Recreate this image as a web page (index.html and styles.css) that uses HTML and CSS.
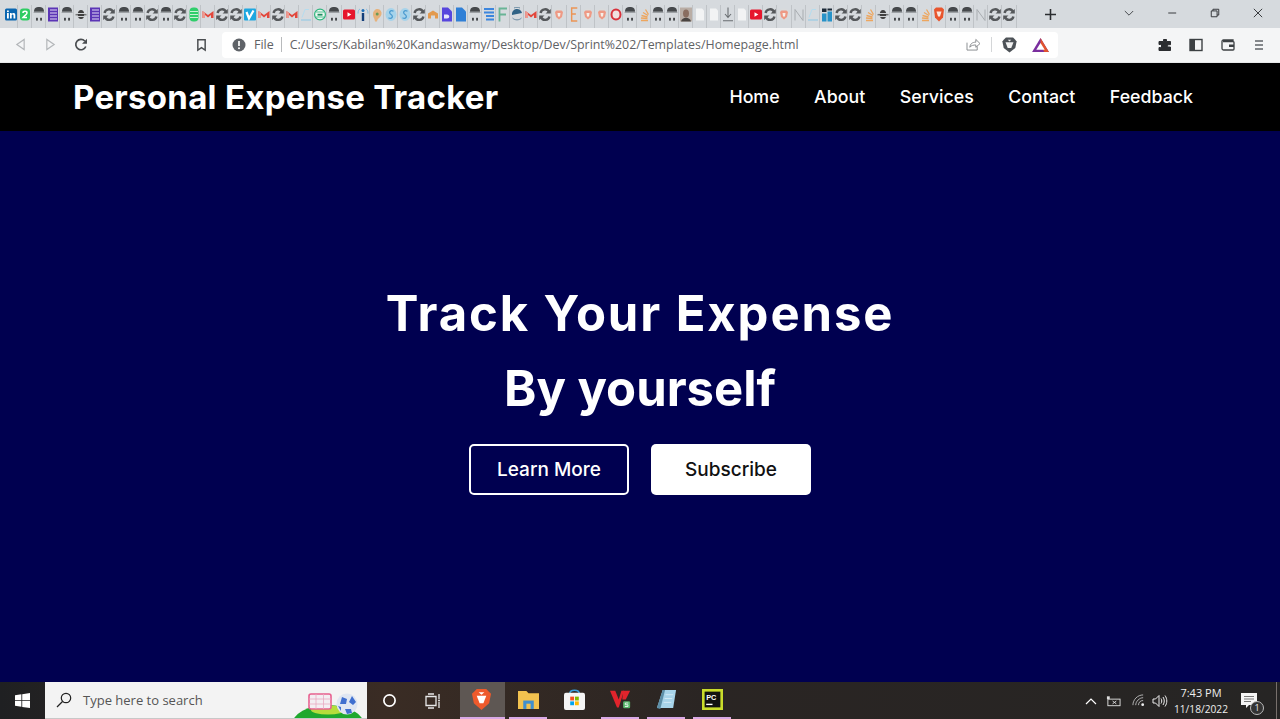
FILE: index.html
```html
<!DOCTYPE html>
<html lang="en">
<head>
<meta charset="utf-8">
<title>Personal Expense Tracker</title>
<link rel="stylesheet" href="styles.css">
</head>
<body>
<svg class="defs" width="0" height="0" aria-hidden="true">
  <symbol id="li" viewBox="0 0 12 12"><rect width="12" height="12" rx="1.5" fill="#0a66b0"/><rect x="2" y="4.5" width="1.8" height="5.5" fill="#fff"/><rect x="2" y="2" width="1.8" height="1.6" fill="#fff"/><path d="M5 4.5h1.7v.9c.9-1.4 3.6-1.4 3.6 1V10H8.5V7c0-1.3-1.8-1.2-1.8.1V10H5z" fill="#fff"/></symbol>
  <symbol id="two" viewBox="0 0 12 14"><rect x="1" y="1" width="10" height="12" rx="3" fill="#2ecc63"/><path d="M4 5.500c0-2.200 4-2.200 4 0 0 1.500-2.500 2.500-4 4.500h4" fill="none" stroke="#fff" stroke-width="1.500"/></symbol>
  <symbol id="gh" viewBox="0 0 12 15"><path d="M1 4.800C1 1 3 0 6 0s5 1 5 4.800z" fill="#45484b"/><rect x=".6" y="4.800" width="10.800" height="1.200" fill="#9da1a5"/><rect x="3" y="10.800" width="1.900" height="2.800" fill="#45484b"/><rect x="7.100" y="10.800" width="1.900" height="2.800" fill="#45484b"/></symbol>
  <symbol id="e" viewBox="0 0 12 14"><rect x="1" width="10" height="14" fill="#5b35b5"/><path d="M3 2.500h7M3 5.500h7M3 8.500h7M3 11.500h7" stroke="#e4dcf6" stroke-width="1"/></symbol>
  <symbol id="bee" viewBox="0 0 12 14"><ellipse cx="6" cy="7" rx="3.200" ry="4.500" fill="#3f3f3f"/><path d="M1 6h10M2 9h8" stroke="#d0d3d6" stroke-width="1"/><path d="M.5 7.300h11" stroke="#3f3f3f" stroke-width=".9"/></symbol>
  <symbol id="sy" viewBox="0 0 12 15"><path d="M1.600 6C2.300 1.800 8.500.8 10 5" fill="none" stroke="#55585b" stroke-width="2.400"/><path d="M10.400 9.500C9.700 13.500 3.500 14.200 2 10" fill="none" stroke="#55585b" stroke-width="2.400"/><path d="M6.500 6.500h5.300V2zM5.500 8.500H.2V13z" fill="#55585b"/></symbol>
  <symbol id="sp" viewBox="0 0 12 14"><rect x="1.500" width="9" height="14" rx="4" fill="#2fce6b"/><path d="M2 4h8M2 7h8M2 10h8" stroke="#c9efd6" stroke-width="1"/></symbol>
  <symbol id="m" viewBox="0 0 12 12"><path d="M.5 2.500 6 6.500l5.500-4v7H9V6.500L6 9 3 6.500v3H.5z" fill="#e2483d"/><path d="M.5 2.500 3 4.500v5H.5z" fill="#ee9a90"/></symbol>
  <symbol id="v" viewBox="0 0 12 14"><rect y="1" width="12" height="12" rx="1" fill="#1ea7e0"/><path d="M2.500 4.500 5 11 9.500 3" fill="none" stroke="#fff" stroke-width="2.200"/></symbol>
  <symbol id="lb" viewBox="0 0 12 14"><path d="M1 12.500h10" stroke="#8cc8e6" stroke-width="1"/><path d="M2 10l3-8h4" fill="none" stroke="#b5dcee" stroke-width="1"/></symbol>
  <symbol id="cb" viewBox="0 0 12 14"><circle cx="6" cy="7" r="5.400" fill="#eef7f1" stroke="#2cb67d" stroke-width="1.200"/><path d="M2 4.500h8M2 9.500h8" stroke="#2cb67d" stroke-width=".8"/><path d="M3.500 7.200h5" stroke="#1d8f60" stroke-width="1.800"/></symbol>
  <symbol id="yt" viewBox="0 0 12 12"><rect y="1" width="12" height="10" rx="1.500" fill="#e6162d"/><path d="M4.500 3.800 8.300 6 4.500 8.200z" fill="#fff"/></symbol>
  <symbol id="i" viewBox="0 0 12 14"><circle cx="6" cy="3" r="1.500" fill="#1d6fb8"/><rect x="4.800" y="5.500" width="2.400" height="8" fill="#143f7a"/><path d="M1 6C1 3 2 2 3 1.500M11 6c0-3-1-4-2-4.500" fill="none" stroke="#7cb6df" stroke-width=".9"/></symbol>
  <symbol id="ear" viewBox="0 0 12 14"><path d="M2 7C2 1 9-.5 10.500 5 11 10 6.500 10 6 14H4C3.500 10 2 10 2 7z" fill="#e6b27c"/><circle cx="6.200" cy="6.500" r="1.500" fill="#6c9a58"/></symbol>
  <symbol id="bl" viewBox="0 0 12 14"><ellipse cx="6" cy="7" rx="5.500" ry="6.500" fill="#a6d3ea"/><path d="M8.500 3.800C5.500 2 3 5 6 7s.5 5-2.500 3.200" fill="none" stroke="#4b9bd0" stroke-width="1.300"/></symbol>
  <symbol id="or" viewBox="0 0 12 12"><path d="M1 10V5l5-3 5 3v5H8V7H4v3z" fill="#e39a4e"/></symbol>
  <symbol id="pd" viewBox="0 0 12 14"><path d="M1 0h6l4 4v10H1z" fill="#5746dd"/><path d="M3 7h3c3 0 3 4 0 4H3z" fill="#e6e4fb"/></symbol>
  <symbol id="bd" viewBox="0 0 12 14"><path d="M1 0h6l4 4v10H1z" fill="#2f7fd6"/></symbol>
  <symbol id="gd" viewBox="0 0 12 14"><path d="M1 1.500h10M1 5h10M3 8.500h8M3 12h8" stroke="#3c86dd" stroke-width="1.800"/></symbol>
  <symbol id="f" viewBox="0 0 12 14"><path d="M2.500 14V1H10M2.500 7H9" fill="none" stroke="#69b496" stroke-width="1.800"/></symbol>
  <symbol id="dc" viewBox="0 0 12 15"><path d="M1 8a5 5 0 0 1 10-2z" fill="#2f6285"/><path d="M1.500 11c2.500 2.500 6.500 2.500 9 0M3 1c2-1 4-1 6 0" fill="none" stroke="#5a7f98" stroke-width=".9"/></symbol>
  <symbol id="br" viewBox="0 0 12 14"><circle cx="6" cy="7" r="5.900" fill="#d9dbdc"/><path d="M3.500 3h5l1.500 1.500-1 5L6 12 3 9.500l-1-5z" fill="#ee9a85"/><path d="M4.500 5.500h3L7 9H5z" fill="#f5efe9"/></symbol>
  <symbol id="eo" viewBox="0 0 12 16"><path d="M9.500 1H3.500v14h6M3.500 7.500H8" fill="none" stroke="#ec9555" stroke-width="1.500"/></symbol>
  <symbol id="ro" viewBox="0 0 12 14"><ellipse cx="6" cy="7" rx="4.500" ry="5" fill="#f0e0e0" stroke="#d8323c" stroke-width="2"/></symbol>
  <symbol id="so" viewBox="0 0 12 14"><path d="M3 13h7M3 10.500l6.500.5M3.500 8l6 1.500M5 5l5 3M7.500 2l3 5" fill="none" stroke="#eda65f" stroke-width="1.300"/></symbol>
  <symbol id="ph" viewBox="0 0 12 14"><rect width="12" height="14" fill="#b9ada5"/><ellipse cx="6" cy="6" rx="3" ry="4" fill="#8a6d5f"/><path d="M1 14c1-5 9-5 10 0z" fill="#4a4441"/></symbol>
  <symbol id="wh" viewBox="0 0 12 14"><path d="M2 1h6l2 2v10H2z" fill="#f2f3f4"/></symbol>
  <symbol id="dl" viewBox="0 0 12 14"><path d="M6 0v9.500M3 6.500 6 10l3-3.500M1 13.300h10" fill="none" stroke="#6a6e72" stroke-width="1.100"/></symbol>
  <symbol id="n" viewBox="0 0 12 14"><path d="M2 13V2l8 11V2" fill="none" stroke="#a8acb0" stroke-width="1"/></symbol>
  <symbol id="bk" viewBox="0 0 12 14"><rect x="1" y="6" width="4.500" height="8" fill="#2792c8"/><rect x="6.500" y="4" width="4.500" height="10" fill="#2792c8"/><rect x="1" y="1" width="4.500" height="3.500" fill="#1c2a38"/><rect x="6.500" y="1" width="4.500" height="2" fill="#1c2a38"/></symbol>
  <symbol id="bv" viewBox="0 0 12 14"><path d="M3 0h6l2 2-1 8-4 4-4-4L1 2z" fill="#e8552d"/><path d="M3.500 4h5L7 9H5z" fill="#fbe6dd"/></symbol>
</svg>

<div class="window">
  <div class="tabstrip">
    <div class="tabs">
      <i class="tab"><svg><use href="#li"/></svg></i><i class="tab"><svg><use href="#two"/></svg></i><i class="tab"><svg><use href="#gh"/></svg></i><i class="tab"><svg><use href="#e"/></svg></i><i class="tab"><svg><use href="#gh"/></svg></i><i class="tab"><svg><use href="#bee"/></svg></i><i class="tab"><svg><use href="#e"/></svg></i><i class="tab"><svg><use href="#sy"/></svg></i><i class="tab"><svg><use href="#gh"/></svg></i><i class="tab"><svg><use href="#gh"/></svg></i><i class="tab"><svg><use href="#sy"/></svg></i><i class="tab"><svg><use href="#gh"/></svg></i><i class="tab"><svg><use href="#sy"/></svg></i><i class="tab"><svg><use href="#sp"/></svg></i><i class="tab"><svg><use href="#m"/></svg></i><i class="tab"><svg><use href="#sy"/></svg></i><i class="tab"><svg><use href="#sy"/></svg></i><i class="tab"><svg><use href="#v"/></svg></i><i class="tab"><svg><use href="#m"/></svg></i><i class="tab"><svg><use href="#sy"/></svg></i><i class="tab"><svg><use href="#m"/></svg></i><i class="tab"><svg><use href="#lb"/></svg></i><i class="tab"><svg><use href="#cb"/></svg></i><i class="tab"><svg><use href="#gh"/></svg></i><i class="tab"><svg><use href="#yt"/></svg></i><i class="tab"><svg><use href="#i"/></svg></i><i class="tab"><svg><use href="#ear"/></svg></i><i class="tab"><svg><use href="#bl"/></svg></i><i class="tab"><svg><use href="#bl"/></svg></i><i class="tab"><svg><use href="#sy"/></svg></i><i class="tab"><svg><use href="#or"/></svg></i><i class="tab"><svg><use href="#pd"/></svg></i><i class="tab"><svg><use href="#bd"/></svg></i><i class="tab"><svg><use href="#gh"/></svg></i><i class="tab"><svg><use href="#gd"/></svg></i><i class="tab"><svg><use href="#f"/></svg></i><i class="tab"><svg><use href="#dc"/></svg></i><i class="tab"><svg><use href="#m"/></svg></i><i class="tab"><svg><use href="#sy"/></svg></i><i class="tab"><svg><use href="#br"/></svg></i><i class="tab"><svg><use href="#eo"/></svg></i><i class="tab"><svg><use href="#br"/></svg></i><i class="tab"><svg><use href="#br"/></svg></i><i class="tab"><svg><use href="#ro"/></svg></i><i class="tab"><svg><use href="#gh"/></svg></i><i class="tab"><svg><use href="#so"/></svg></i><i class="tab"><svg><use href="#gh"/></svg></i><i class="tab"><svg><use href="#gh"/></svg></i><i class="tab"><svg><use href="#ph"/></svg></i><i class="tab"><svg><use href="#wh"/></svg></i><i class="tab"><svg><use href="#wh"/></svg></i><i class="tab"><svg><use href="#dl"/></svg></i><i class="tab"><svg><use href="#wh"/></svg></i><i class="tab"><svg><use href="#yt"/></svg></i><i class="tab"><svg><use href="#sy"/></svg></i><i class="tab"><svg><use href="#br"/></svg></i><i class="tab"><svg><use href="#n"/></svg></i><i class="tab"><svg><use href="#lb"/></svg></i><i class="tab"><svg><use href="#bk"/></svg></i><i class="tab"><svg><use href="#sy"/></svg></i><i class="tab"><svg><use href="#sy"/></svg></i><i class="tab"><svg><use href="#so"/></svg></i><i class="tab"><svg><use href="#bee"/></svg></i><i class="tab"><svg><use href="#gh"/></svg></i><i class="tab"><svg><use href="#gh"/></svg></i><i class="tab"><svg><use href="#so"/></svg></i><i class="tab"><svg><use href="#bv"/></svg></i><i class="tab"><svg><use href="#gh"/></svg></i><i class="tab"><svg><use href="#gh"/></svg></i><i class="tab"><svg><use href="#n"/></svg></i><i class="tab"><svg><use href="#sy"/></svg></i><i class="tab"><svg><use href="#sy"/></svg></i>
    </div>
    <svg class="newtab" viewBox="0 0 12 12"><path d="M6 0v12M0 6h12" stroke="#2b2d30" stroke-width="1.700"/></svg>
    <svg class="tabmenu" viewBox="0 0 12 8"><path d="M1 1l5 5 5-5" fill="none" stroke="#3c4043" stroke-width="1.100"/></svg>
    <div class="winctl">
      <svg viewBox="0 0 12 12"><path d="M1.500 6h9.500" stroke="#2b2d30" stroke-width="1.100"/></svg>
      <svg viewBox="0 0 12 12"><path d="M1.500 3.500h7v7h-7zM3.500 3.500v-2h7v7h-2" fill="none" stroke="#2b2d30" stroke-width="1.100"/></svg>
      <svg viewBox="0 0 12 12"><path d="M1 1l10 10M11 1 1 11" stroke="#2b2d30" stroke-width="1.100"/></svg>
    </div>
  </div>

  <div class="toolbar">
    <svg class="nav-back" viewBox="0 0 12 14"><path d="M10 1.500v11L2 7z" fill="none" stroke="#b3b6b9" stroke-width="1.300"/></svg>
    <svg class="nav-fwd" viewBox="0 0 12 14"><path d="M2 1.500v11L10 7z" fill="none" stroke="#b3b6b9" stroke-width="1.300"/></svg>
    <svg class="nav-reload" viewBox="0 0 14 14"><path d="M11.800 8.500A5.200 5.200 0 1 1 10.800 3" fill="none" stroke="#4a4d50" stroke-width="1.700"/><path d="M13 .8v5H8z" fill="#4a4d50"/></svg>
    <svg class="nav-mark" viewBox="0 0 12 14"><path d="M2 1.200h8v11.300L6 9.800 2 12.500z" fill="none" stroke="#4a4d50" stroke-width="1.600"/></svg>
    <div class="omnibox">
      <svg class="info" viewBox="0 0 14 14"><circle cx="7" cy="7" r="6.500" fill="#5f6368"/><path d="M7 3v5" stroke="#fff" stroke-width="1.700"/><circle cx="7" cy="10.200" r="1" fill="#fff"/></svg>
      <span class="scheme">File</span>
      <span class="url">C:/Users/Kabilan%20Kandaswamy/Desktop/Dev/Sprint%202/Templates/Homepage.html</span>
      <svg class="share" viewBox="0 0 16 14"><path d="M1 5v8h11V9" fill="none" stroke="#85888b"/><path d="M4 10c.5-4 3-5.500 6.500-5.500V1.500L15 6l-4.500 4V7.500C8 7.500 5.500 8 4 10z" fill="none" stroke="#85888b"/></svg>
      <span class="omni-sep"></span>
      <svg class="brave" viewBox="0 0 16 18"><path d="M4 .5h8l2.500 2.500L16 5l-1.500 7.500L8 17.500 1.500 12.500 0 5l1.500-2z" fill="#4d5257"/><path d="M3.500 6h9L10 12.500H6z" fill="#f2f2f2"/><path d="M6 3h4L8 5z" fill="#f2f2f2"/></svg>
      <svg class="bat" viewBox="0 0 18 16"><path d="M9 1 18 16H0z" fill="#7a2e9e"/><path d="M9 1 18 16h-5L9 8.500z" fill="#e0532e"/><path d="M9 6.500 13.500 13.500h-9z" fill="#fff"/></svg>
    </div>
    <svg class="tool tool-first" viewBox="0 0 14 14"><path d="M5.500 1.500h3v2h4v3.200h-2c-1.200 0-1.200 2.300 0 2.300h2v3.500H1v-3h1.500c1.500 0 1.500-3 0-3H1V3.500h4.500z" fill="#2b2d30" stroke="#2b2d30"/></svg>
    <svg class="tool" viewBox="0 0 14 14"><rect x="1" y="1.500" width="12" height="11" fill="none" stroke="#3c4043" stroke-width="1.400"/><rect x="1" y="1.500" width="5" height="11" fill="#3c4043"/></svg>
    <svg class="tool" viewBox="0 0 14 14"><path d="M12 3.500V2H2.500C1.500 2 1 2.500 1 3.500v7c0 1 .5 1.500 1.500 1.500H12c.7 0 1-.3 1-1V4.500c0-.7-.3-1-1-1H2" fill="none" stroke="#3c4043" stroke-width="1.300"/><rect x="8" y="6.500" width="5" height="2.500" fill="#3c4043"/></svg>
    <svg class="tool" viewBox="0 0 14 14"><path d="M3 3h8M3 7h8M3 11h8" stroke="#5f6368" stroke-width="1.300"/></svg>
  </div>

  <header class="site-header">
    <div class="brand">Personal Expense Tracker</div>
    <nav class="site-nav">
      <a href="#">Home</a>
      <a href="#">About</a>
      <a href="#">Services</a>
      <a href="#">Contact</a>
      <a href="#">Feedback</a>
    </nav>
  </header>

  <main class="hero">
    <h1 class="line-wide">Track Your Expense</h1>
    <h1>By yourself</h1>
    <div class="cta">
      <a class="btn btn-outline" href="#">Learn More</a>
      <a class="btn btn-solid" href="#">Subscribe</a>
    </div>
  </main>

  <footer class="taskbar">
    <div class="start"><svg viewBox="0 0 16 16"><path d="M0 2.300 6.800 1.300v6.300H0zM7.700 1.200 16 0v7.600H7.700zM0 8.400h6.800v6.300L0 13.700zM7.700 8.400H16V16l-8.300-1.200z" fill="#fff"/></svg></div>
    <div class="search">
      <svg class="lens" viewBox="0 0 16 16"><circle cx="10" cy="6" r="4.700" fill="none" stroke="#222" stroke-width="1.200"/><path d="M6.500 9.500 1 15" stroke="#222" stroke-width="1.300"/></svg>
      <span>Type here to search</span>
      <svg class="doodle" viewBox="0 0 76 37"><ellipse cx="37" cy="43" rx="36" ry="20" fill="#1fa82e"/><ellipse cx="37" cy="28" rx="17" ry="4.500" fill="#b5dd3c"/><rect x="18" y="12" width="22" height="15" rx="2" fill="#f3eef2" stroke="#e8608f" stroke-width="1.600"/><path d="M18 17h22M18 22h22M25 12v15M32.500 12v15" stroke="#e8a9c2" stroke-width=".8"/><circle cx="56" cy="22" r="10.500" fill="#dfe6f2"/><path d="M51 15l5 2-1 5-6 0zM61 14l4 6-3 3-4-3zM54 27l6 0 1 4-5 1zM47 24l3 1 0 4z" fill="#3f6fcf"/></svg>
    </div>
    <svg class="cortana" viewBox="0 0 16 16"><circle cx="8" cy="8" r="6" fill="none" stroke="#fff" stroke-width="1.800"/></svg>
    <svg class="taskview" viewBox="0 0 18 16"><path d="M1 3.500h10v9H1z" fill="none" stroke="#e8e8e8" stroke-width="1.300"/><path d="M3 1h6M3 15h6M14 1v5M14 9v6" stroke="#e8e8e8" stroke-width="1.300"/><circle cx="14" cy="7.500" r="1" fill="#e8e8e8"/></svg>
    <div class="apps">
      <div class="app app-active"><svg viewBox="0 0 20 22"><path d="M5 0h10l2.500 2.500L20 5l-2 10-8 7-8-7L0 5l2.500-2.500z" fill="#ee5a2c"/><path d="M5 7h10l-3 8H8z" fill="#fff"/><path d="M7 3.500h6L10 6z" fill="#fff"/></svg></div>
      <div class="app app-on"><svg viewBox="0 0 20 18"><path d="M0 1h8l2 2h10v15H0z" fill="#f2c24f"/><rect x="5" y="10" width="10" height="8" fill="#3f8fcf"/><rect x="8" y="13" width="4" height="5" fill="#f2c24f"/></svg></div>
      <div class="app"><svg viewBox="0 0 22 22"><path d="M6 5C6 0 16 0 16 5" fill="none" stroke="#39a0e0" stroke-width="1.600"/><rect y="4" width="22" height="18" rx="2" fill="#f5f5f5"/><rect x="6.500" y="8" width="4" height="4" fill="#f25022"/><rect x="11.500" y="8" width="4" height="4" fill="#7fba00"/><rect x="6.500" y="13" width="4" height="4" fill="#00a4ef"/><rect x="11.500" y="13" width="4" height="4" fill="#ffb900"/></svg></div>
      <div class="app app-on"><svg viewBox="0 0 24 22"><path d="M0 1h6l4 10 3-10h3L10 20H8z" fill="#e0242c"/><path d="M15 1h8l-5 10h-4z" fill="#e0242c"/><rect x="15" y="13" width="8" height="8" rx="1.500" fill="#56b56a"/><path d="M21 15h-3.500v2h3v2H17" fill="none" stroke="#fff" stroke-width=".9"/></svg></div>
      <div class="app app-on"><svg viewBox="0 0 22 22"><path d="M7 1h14l-3 19H1z" fill="#a8d4ea"/><path d="M7 1 1 20l3.500 1 5-20z" fill="#5d8fa8"/><path d="M10 6h8M9 10h8M8 14h8" stroke="#dff0f8" stroke-width=".8"/></svg></div>
      <div class="app app-on"><svg viewBox="0 0 20 20"><rect width="20" height="20" fill="#c9dc2b"/><rect x="2.500" y="2.500" width="15" height="15" fill="#111"/><text class="pc-text" x="4" y="10">PC</text><rect x="4" y="14" width="6" height="1.300" fill="#fff"/></svg></div>
    </div>
    <div class="tray">
      <svg class="tray-up" viewBox="0 0 12 8"><path d="M1 7l5-5 5 5" fill="none" stroke="#fff" stroke-width="1.200"/></svg>
      <svg class="tray-net" viewBox="0 0 16 12"><rect x="1" y="1" width="3" height="3" fill="#ddd"/><rect x="2" y="4" width="13" height="7" fill="none" stroke="#ddd"/><path d="M7 6l4 3M11 6 7 9" stroke="#ddd"/></svg>
      <svg class="tray-wifi" viewBox="0 0 14 14"><path d="M1 12c0-6 5-11 11-11M4 12c0-4 4-8 8-8M7 12c0-3 2-5 5-5" fill="none" stroke="#bbb"/><circle cx="11.500" cy="11.500" r="1.500" fill="#eee"/></svg>
      <svg class="tray-vol" viewBox="0 0 16 14"><path d="M1 5h2.500L7 1.500v11L3.500 9H1z" fill="none" stroke="#eee"/><path d="M9 4.500c1 1.500 1 3.500 0 5M11 3c1.700 2.500 1.700 5.500 0 8M13 1.500c2.400 3.500 2.400 7.500 0 11" fill="none" stroke="#eee"/></svg>
      <div class="clock"><span>7:43 PM</span><span class="clock-date">11/18/2022</span></div>
      <div class="notify">
        <svg viewBox="0 0 18 16"><path d="M0 0h16v12H8l-3 3v-3H0z" fill="#f5f5f5"/><path d="M3 3.500h10M3 6h10M3 8.500h7" stroke="#777" stroke-width="1"/></svg>
        <span class="badge">1</span>
      </div>
      <span class="peek"></span>
    </div>
  </footer>
</div>
</body>
</html>
```

FILE: styles.css
```css
* { box-sizing: border-box; }
html, body { margin: 0; height: 100%; overflow: hidden; }
body { font-family: "Segoe UI", "Open Sans", "Noto Sans", sans-serif; }
.defs { position: absolute; }
.window { display: flex; flex-direction: column; height: 719px; width: 1280px; }

/* Tab strip */
.tabstrip { display: flex; align-items: center; height: 28px; background: #d6dade; padding-left: 4px; flex: none; }
.tabs { display: grid; grid-template-columns: repeat(72, 14.07px); width: 1013px; height: 28px; align-items: end; }
.tab { display: flex; align-items: center; justify-content: center; height: 23px; padding-bottom: 5px; border-right: 1px solid #bfc3c7; }
.tab svg { width: 12px; height: 15px; flex: none; margin-left: 1px; }
.newtab { width: 11px; height: 11px; margin-left: 28px; }
.tabmenu { width: 10px; height: 7px; margin-left: 68px; margin-bottom: 2px; }
.winctl { display: flex; gap: 33px; margin-left: 33px; margin-bottom: 2px; }
.winctl svg { width: 10px; height: 10px; }

/* Toolbar */
.toolbar { display: flex; align-items: center; height: 35px; background: #f4f5f6; border-bottom: 1px solid #e6e7e9; flex: none; padding: 0 0 1px 15px; }
.nav-back, .nav-fwd { width: 11px; height: 13px; }
.nav-fwd { margin-left: 19px; }
.nav-reload { width: 14px; height: 14px; margin-left: 18px; }
.nav-mark { width: 11px; height: 14px; margin-left: 108px; }
.omnibox { display: flex; align-items: center; width: 836px; height: 26px; margin-left: 15px; padding: 0 9px 0 10px; background: #fff; border-radius: 4px; color: #5f6265; font-size: 12.5px; }
.info { width: 14px; height: 14px; flex: none; }
.scheme { margin-left: 8px; padding-right: 7px; border-right: 1px solid #b8babc; line-height: 15px; }
.url { margin-left: 8px; white-space: nowrap; flex: 1; font-size: 12.4px; }
.share { width: 15px; height: 13px; flex: none; }
.omni-sep { width: 1px; height: 15px; background: #d4d6d8; margin: 0 10px; }
.brave { width: 15px; height: 16px; flex: none; }
.bat { width: 17px; height: 15px; margin-left: 15px; flex: none; }
.tool { width: 14px; height: 14px; margin-left: 17px; flex: none; }
.tool-first { margin-left: 100px; }
.tool:nth-last-child(2), .tool:last-child { transform: translateX(1px); }

/* Page */
.site-header { display: flex; align-items: center; justify-content: space-between; height: 68px; padding: 0 87px 0 73px; background: #000; color: #fff; flex: none; }
.brand { font-family: Inter, "Liberation Sans", sans-serif; font-weight: 650; font-size: 33px; letter-spacing: .28px; white-space: nowrap; }
.site-nav { display: flex; gap: 34.5px; padding-bottom: 1px; }
.site-nav a { color: #fff; text-decoration: none; font-family: Inter, "Liberation Sans", sans-serif; font-weight: 500; font-size: 17.8px; }
.hero { flex: 1; display: flex; flex-direction: column; align-items: center; justify-content: center; background: #000050; color: #fff; padding-bottom: 43px; }
.hero h1 { margin: 0; font-family: Inter, "Liberation Sans", sans-serif; font-weight: 650; font-size: 49px; line-height: 75px; white-space: nowrap; }
.hero .line-wide { letter-spacing: 1.9px; }
.cta { display: flex; gap: 22px; margin-top: 18px; }
.btn { display: flex; align-items: center; justify-content: center; width: 160px; height: 51px; border-radius: 5px; font-family: Inter, "Liberation Sans", sans-serif; font-weight: 500; font-size: 19px; text-decoration: none; }
.btn-outline { border: 2px solid #fff; color: #fff; }
.btn-solid { background: #fff; color: #111; }

/* Taskbar */
.taskbar { display: flex; align-items: center; height: 37px; background: linear-gradient(90deg, #1f2022, #3a2c24 30%, #2a2523 55%, #262524); color: #fff; flex: none; }
.start { display: flex; align-items: center; justify-content: center; width: 45px; height: 37px; }
.start svg { width: 15px; height: 15px; }
.search { position: relative; display: flex; align-items: center; width: 322px; height: 37px; padding-left: 11px; background: #f3f3f3; color: #555; font-size: 13px; overflow: hidden; border-bottom: 1px solid #c8c8c8; }
.search span { margin-left: 11px; }
.lens { width: 16px; height: 16px; }
.doodle { position: absolute; right: 0; top: 0; width: 76px; height: 37px; }
.cortana { width: 15px; height: 15px; margin-left: 15px; }
.taskview { width: 18px; height: 16px; margin-left: 28px; }
.apps { display: flex; margin-left: 17px; }
.app { display: flex; align-items: center; justify-content: center; width: 38px; height: 37px; margin: 0 4px; border-bottom: 2px solid transparent; }
.app svg { width: 21px; height: 21px; flex: none; }
.app-active { width: 45px; margin: 0; padding-right: 2px; background: #5e5753; border-bottom-color: #d9a9e6; }
.app-on { border-bottom-color: #d9a9e6; }
.pc-text { font-family: "Liberation Sans", sans-serif; font-size: 7px; font-weight: 700; fill: #fff; }
.tray { display: flex; align-items: center; margin-left: auto; height: 37px; color: #eee; }
.tray-up { width: 12px; height: 8px; }
.tray-net { width: 15px; height: 12px; margin-left: 9px; }
.tray-wifi { width: 13px; height: 13px; margin-left: 11px; }
.tray-vol { width: 16px; height: 14px; margin-left: 7px; }
.clock { display: flex; flex-direction: column; align-items: center; width: 60px; margin-left: 3px; font-size: 11px; line-height: 17px; }
.clock-date { font-size: 10.2px; }
.notify { position: relative; display: flex; align-items: center; margin-left: 10px; width: 27px; }
.notify svg { width: 18px; height: 16px; }
.badge { position: absolute; left: 9px; top: 8px; width: 14px; height: 14px; border-radius: 50%; background: #333; border: 1px solid #bbb; font-size: 9px; line-height: 12px; text-align: center; }
.peek { width: 1px; height: 37px; background: #77706c; margin-left: 8px; margin-right: 3px; }
```
